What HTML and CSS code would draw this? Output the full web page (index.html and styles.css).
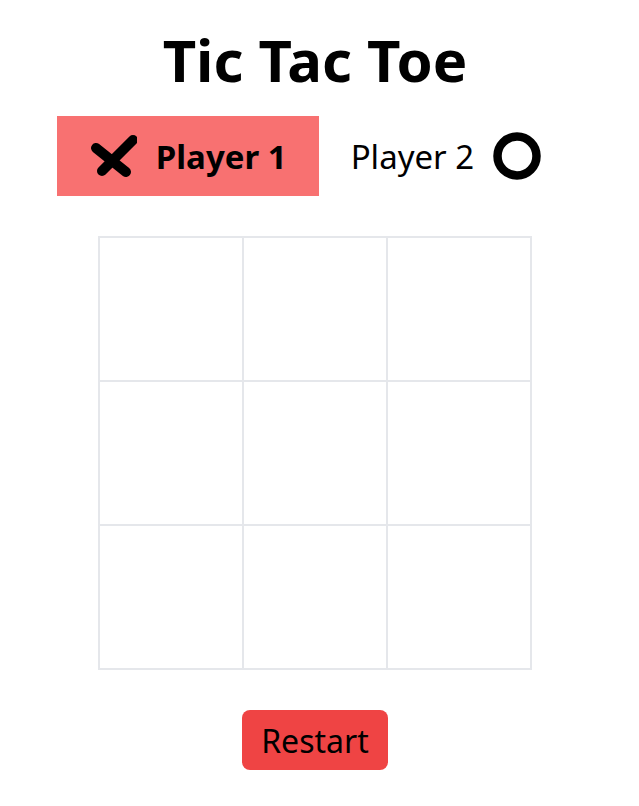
FILE: index.html
```html
<!DOCTYPE html>
<html lang="en">
<head>
<meta charset="utf-8">
<title>Tic Tac Toe</title>
<link rel="stylesheet" href="styles.css">
</head>
<body>
<main class="app">
  <h1 class="title">Tic Tac Toe</h1>
  <div class="players">
    <div class="player active">
      <svg class="icon" viewBox="0 0 48 48" width="48" height="48" aria-hidden="true">
        <path d="M7 16 L37 40 M13 39 L44 8" stroke="#000" stroke-width="10" stroke-linecap="round" fill="none"/>
      </svg>
      <span class="name">Player 1</span>
    </div>
    <div class="player">
      <span class="name">Player 2</span>
      <svg class="icon" viewBox="0 0 48 48" width="48" height="48" aria-hidden="true">
        <circle cx="24" cy="24" r="19.5" stroke="#000" stroke-width="8.5" fill="none"/>
      </svg>
    </div>
  </div>
  <div class="board">
    <button class="cell"></button><button class="cell"></button><button class="cell"></button>
    <button class="cell"></button><button class="cell"></button><button class="cell"></button>
    <button class="cell"></button><button class="cell"></button><button class="cell"></button>
  </div>
  <button class="restart">Restart</button>
</main>
</body>
</html>
```
FILE: styles.css
```css
* { box-sizing: border-box; }
html, body { margin: 0; padding: 0; background: #fff; }
body {
  font-family: "Noto Sans", "Open Sans", sans-serif;
  color: #000;
}
.app {
  width: 630px;
  display: flex;
  flex-direction: column;
  align-items: center;
  padding-top: 20px;
}
.title {
  margin: 0;
  font-size: 58px;
  font-weight: 700;
  line-height: 80px;
}
.players {
  display: flex;
  margin-top: 16px;
}
.player {
  display: flex;
  align-items: center;
  gap: 19px;
  height: 80px;
  padding: 0 32px;
}
.player.active { background: #f87171; }
.player.active .name { font-weight: 700; }
.name { font-size: 33px; line-height: 1; }
.icon { display: block; }
.board {
  margin-top: 40px;
  display: grid;
  grid-template-columns: repeat(3, 144px);
  grid-template-rows: repeat(3, 144px);
  border: 1px solid #e5e7eb;
}
.cell {
  border: 1px solid #e5e7eb;
  background: #fff;
  padding: 0;
  margin: 0;
}
.restart {
  margin-top: 40px;
  height: 60px;
  padding: 0 19px;
  border: none;
  border-radius: 8px;
  background: #ef4444;
  color: #000;
  font-family: inherit;
  font-size: 32px;
}
```
